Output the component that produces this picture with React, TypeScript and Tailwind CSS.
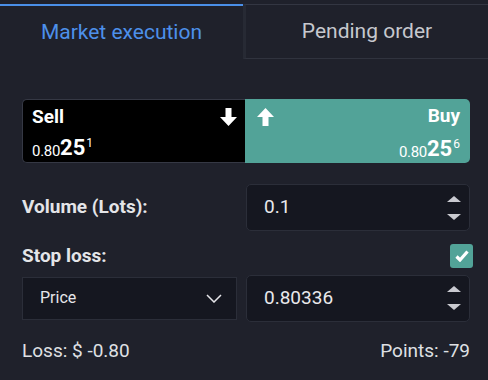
import React from 'react';

const Spinner: React.FC = () => (
  <div className="flex flex-col items-center gap-[12px] pr-[8px]">
    <svg width="14" height="6" viewBox="0 0 14 6">
      <path d="M7 0 L14 6 L0 6 Z" fill="#c9cad0" />
    </svg>
    <svg width="14" height="6" viewBox="0 0 14 6">
      <path d="M0 0 L14 0 L7 6 Z" fill="#c9cad0" />
    </svg>
  </div>
);

const ArrowIcon: React.FC<{ up?: boolean }> = ({ up }) => (
  <svg width="17" height="18" viewBox="0 0 17 18" className={up ? 'rotate-180' : ''}>
    <path d="M5.5 0 H11.5 V9 H17 L8.5 18 L0 9 H5.5 Z" fill="#ffffff" />
  </svg>
);

const NumberInput: React.FC<{ value: string; className?: string }> = ({ value, className }) => (
  <div
    className={`w-[224px] h-[47px] flex items-center justify-between bg-[#151720] border border-[#2b2e39] rounded-[5px] pl-[17px] ${className ?? ''}`}
  >
    <span className="text-[19px] text-[#e9e9ec]">{value}</span>
    <Spinner />
  </div>
);

export default function App() {
  return (
    <div className="w-[488px] h-[380px] bg-[#1f212b] font-['Roboto',sans-serif] overflow-hidden">
      {/* tabs */}
      <div className="flex pt-[4px]">
        <div className="w-[243px] h-[55px] border-t-2 border-[#4a8fe8] flex items-center justify-center text-[21px] text-[#4d90ea]">
          Market execution
        </div>
        <div className="flex-1 h-[55px] border-t border-[#333642] border-b border-b-[#30333e] border-l-[3px] border-l-[#272a34] flex items-center justify-center text-[21px] text-[#c6c8ce]">
          Pending order
        </div>
      </div>

      <div className="pl-[22px] pr-[18px] pt-[40px]">
        {/* sell / buy */}
        <div className="flex h-[64px]">
          <div className="w-[223px] bg-black border border-[#353844] border-r-0 rounded-l-[5px] pl-[9px] pr-[8px] pt-[5px] flex flex-col justify-between pb-[3px]">
            <div className="flex items-start justify-between">
              <span className="text-[19px] font-bold text-white leading-[24px]">Sell</span>
              <div className="pt-[3px]">
                <ArrowIcon />
              </div>
            </div>
            <div className="text-white leading-none flex items-start">
              <span className="text-[15px] pt-[7px] tracking-[-0.3px]">0.80</span>
              <span className="text-[22px] font-bold">25</span>
              <span className="text-[12px] pl-[1px]">1</span>
            </div>
          </div>
          <div className="flex-1 bg-[#52a398] rounded-r-[5px] pl-[12px] pr-[10px] pt-[5px] pb-[3px] flex flex-col justify-between">
            <div className="flex items-start justify-between">
              <div className="pt-[4px]">
                <ArrowIcon up />
              </div>
              <span className="text-[19px] font-bold text-white leading-[24px]">Buy</span>
            </div>
            <div className="text-white leading-none flex items-start justify-end">
              <span className="text-[15px] pt-[7px] tracking-[-0.3px]">0.80</span>
              <span className="text-[22px] font-bold">25</span>
              <span className="text-[12px] pl-[1px]">6</span>
            </div>
          </div>
        </div>

        {/* volume */}
        <div className="flex items-center justify-between mt-[21px]">
          <span className="text-[19px] font-bold text-[#e4e5e8]">Volume (Lots):</span>
          <NumberInput value="0.1" />
        </div>

        {/* stop loss */}
        <div className="flex items-center justify-between mt-[11px] mr-[-3px]">
          <span className="text-[19px] font-bold text-[#e4e5e8]">Stop loss:</span>
          <div className="w-[23px] h-[24px] bg-[#52a398] rounded-[3px] flex items-center justify-center">
            <svg width="14" height="12" viewBox="0 0 14 12">
              <path d="M1.5 6.5 L5 10 L12.5 1.5" stroke="#ffffff" strokeWidth="3.2" fill="none" />
            </svg>
          </div>
        </div>

        {/* price row */}
        <div className="flex items-center justify-between mt-[4px]">
          <div className="w-[215px] h-[43px] bg-[#151720] border border-[#2b2e39] flex items-center justify-between pl-[17px] pr-[14px]">
            <span className="text-[16px] text-[#e6e6ea]">Price</span>
            <svg width="16" height="9" viewBox="0 0 16 9">
              <path d="M1 1 L8 8 L15 1" stroke="#e6e6ea" strokeWidth="1.5" fill="none" />
            </svg>
          </div>
          <NumberInput value="0.80336" />
        </div>

        {/* loss / points */}
        <div className="flex items-center justify-between mt-[15px] text-[19px] text-[#dfe0e4]">
          <span>Loss: $ -0.80</span>
          <span>Points: -79</span>
        </div>
      </div>
    </div>
  );
}
